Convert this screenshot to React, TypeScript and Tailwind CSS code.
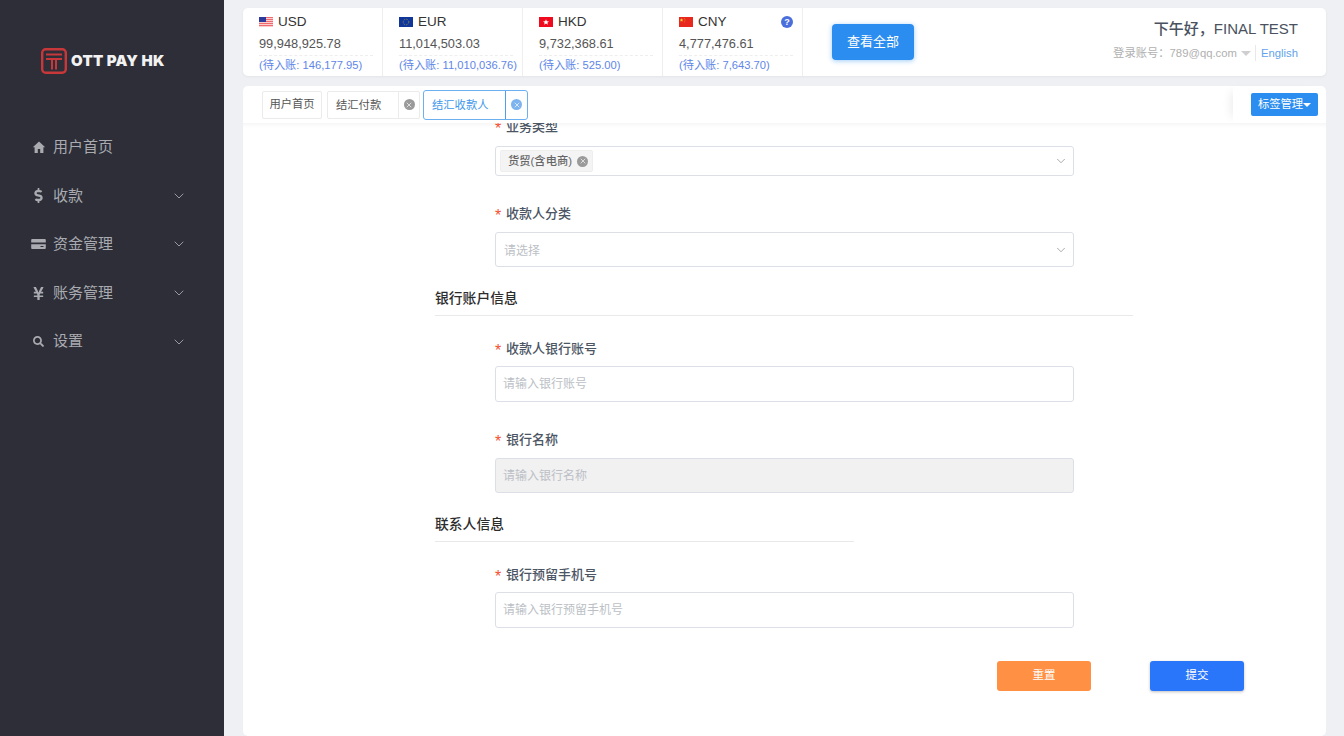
import React from "react";
import { FaDollarSign, FaYenSign, FaSearch } from "react-icons/fa";
import { ChevronDown, X } from "lucide-react";

const font = { fontFamily: '"Liberation Sans", "Noto Sans CJK SC", sans-serif' };

const Flag = ({ c }: { c: string }) => {
  if (c === "USD")
    return (
      <svg width="14" height="10" viewBox="0 0 14 10">
        <rect width="14" height="10" fill="#fbdada" />
        {[0, 2, 4, 6, 8].map((y) => (
          <rect key={y} y={y} width="14" height="1.1" fill="#ee6a6e" />
        ))}
        <rect width="7" height="5" fill="#2c3a9c" />
      </svg>
    );
  if (c === "EUR")
    return (
      <svg width="14" height="10" viewBox="0 0 14 10">
        <rect width="14" height="10" fill="#10369a" />
        <circle cx="7" cy="5" r="2.8" fill="none" stroke="#c9b63a" strokeWidth="0.7" strokeDasharray="0.8 1" />
      </svg>
    );
  if (c === "HKD")
    return (
      <svg width="14" height="10" viewBox="0 0 14 10">
        <rect width="14" height="10" fill="#f00a1e" />
        <path d="M7 2.2 7.8 4.3 10 4.4 8.3 5.7 8.9 7.8 7 6.6 5.1 7.8 5.7 5.7 4 4.4 6.2 4.3Z" fill="#fff" />
      </svg>
    );
  return (
    <svg width="14" height="10" viewBox="0 0 14 10">
      <rect width="14" height="10" fill="#e8281c" />
      <path d="M2.5 1.2 3 2.5 4.2 2.6 3.3 3.4 3.6 4.6 2.5 3.9 1.4 4.6 1.7 3.4 .8 2.6 2 2.5Z" fill="#f6d838" />
      <circle cx="5.2" cy="1.4" r=".35" fill="#f6d838" />
      <circle cx="6" cy="2.5" r=".35" fill="#f6d838" />
      <circle cx="6" cy="3.8" r=".35" fill="#f6d838" />
      <circle cx="5.2" cy="4.9" r=".35" fill="#f6d838" />
    </svg>
  );
};

const currencies = [
  { c: "USD", v: "99,948,925.78", p: "(待入账: 146,177.95)" },
  { c: "EUR", v: "11,014,503.03", p: "(待入账: 11,010,036.76)" },
  { c: "HKD", v: "9,732,368.61", p: "(待入账: 525.00)" },
  { c: "CNY", v: "4,777,476.61", p: "(待入账: 7,643.70)" },
];

const HomeIcon = () => (
  <svg width="14" height="14" viewBox="0 0 14 14" fill="currentColor">
    <path d="M7 1.5.8 7.2h1.8V13h3.2V9h2.4v4h3.2V7.2h1.8z" />
  </svg>
);

const CardIcon = () => (
  <svg width="15" height="12" viewBox="0 0 15 12" fill="currentColor">
    <path fillRule="evenodd" d="M1.2 1h12.6c.5 0 1 .5 1 1v8c0 .5-.5 1-1 1H1.2c-.5 0-1-.5-1-1V2c0-.5.5-1 1-1ZM.2 4.6v1.6h14.6V4.6ZM9.5 8v1h3V8Z" />
  </svg>
);

const nav = [
  { t: "用户首页", i: <HomeIcon />, arrow: false },
  { t: "收款", i: <FaDollarSign size={15} />, arrow: true },
  { t: "资金管理", i: <CardIcon />, arrow: true },
  { t: "账务管理", i: <FaYenSign size={15} />, arrow: true },
  { t: "设置", i: <FaSearch size={11} />, arrow: true },
];

const Close = ({ bg }: { bg: string }) => (
  <span className={`flex h-[11px] w-[11px] items-center justify-center rounded-full ${bg}`}>
    <X size={8} strokeWidth={2} className="text-white" />
  </span>
);

const Label = ({ t, cls }: { t: string; cls: string }) => (
  <div className={`ml-[60px] flex items-center text-[13px] font-medium leading-[18px] text-[#4b5563] ${cls}`}>
    <span className="mr-[5px] w-[6px] translate-y-[2px] text-[16px] leading-[18px] text-[#f5502f]">*</span>
    {t}
  </div>
);

const Section = ({ t, w, cls }: { t: string; w: string; cls: string }) => (
  <div className={`${w} border-b border-[#e9e9e9] pb-[7px] text-[13.8px] font-medium leading-[18px] text-[#2c2c2c] ${cls}`}>{t}</div>
);

const TextInput = ({ p, h, disabled }: { p: string; h: string; disabled?: boolean }) => (
  <div
    className={`ml-[60px] flex w-[579px] items-center rounded-[3px] border border-[#dcdfe6] px-[7px] text-[12px] text-[#bcbfc6] ${h} ${
      disabled ? "bg-[#f1f1f1]" : "bg-white"
    }`}
  >
    {p}
  </div>
);

export default function App() {
  return (
    <div className="flex h-[736px] w-[1344px] overflow-hidden bg-[#eef0f4]" style={font}>
      <aside className="w-[224px] shrink-0 bg-[#2d2e38]">
        <div className="ml-[41px] mt-[48px] flex h-[26px] items-center">
          <svg width="26" height="26" viewBox="0 0 26 26" fill="none">
            <rect x="1.2" y="1.2" width="23.6" height="23.6" rx="3.5" stroke="#c8383a" strokeWidth="2.4" />
            <path d="M5 5.5H21V7.5H5ZM5 10H21V12H5ZM10 12H12V21.5H10ZM14 12H16V21.5H14Z" fill="#c8383a" />
          </svg>
          <span
            className="ml-[4px] whitespace-nowrap text-[15px] font-black tracking-[0.25px] text-[#f2f2f2]"
            style={{ fontFamily: 'Inter, "Liberation Sans", sans-serif' }}
          >
            OTT PAY HK
          </span>
        </div>
        <nav className="mt-[49px]">
          {nav.map((n) => (
            <div key={n.t} className="flex h-[48.6px] items-center pl-[31px] pr-[37px] text-[#a9abb0]">
              <span className="flex w-[15px] justify-center">{n.i}</span>
              <span className="ml-[7px] flex-1 text-[15px]">{n.t}</span>
              {n.arrow && <ChevronDown size={16} strokeWidth={1.3} />}
            </div>
          ))}
        </nav>
      </aside>

      <main className="ml-[19px] w-[1083px] pt-[8px]">
        <header className="flex h-[68px] rounded-[5px] bg-white shadow-[0_1px_3px_rgba(0,0,0,0.05)]">
          {currencies.map((x) => (
            <div key={x.c} className="w-[140px] border-r border-[#eeeeee] pl-[16px] pr-[9px] pt-[6px]">
              <div className="flex h-[16px] items-center text-[13.5px] leading-[16px] text-[#333]">
                <Flag c={x.c} />
                <span className="ml-[5px]">{x.c}</span>
                {x.c === "CNY" && (
                  <span className="ml-auto flex h-[12px] w-[12px] items-center justify-center rounded-full bg-[#4a6fdc] text-[9px] font-bold text-white">
                    ?
                  </span>
                )}
              </div>
              <div className="mt-[4.5px] border-b border-dashed border-[#eeeeee] pb-[3.5px] text-[12.8px] leading-[17px] text-[#555]">{x.v}</div>
              <div className="mt-px whitespace-nowrap text-[11.2px] leading-[16px] text-[#6086e8]">{x.p}</div>
            </div>
          ))}
          <div className="ml-[29px] mt-[16px] flex h-[36px] w-[82px] items-center justify-center rounded-[4px] bg-[#2b8df0] text-[13px] text-white shadow-[0_1px_5px_rgba(43,141,240,0.45)]">
            查看全部
          </div>
          <div className="ml-auto flex flex-col items-end pr-[28px] pt-[11px]">
            <div className="text-[15px] font-medium leading-[20px] text-[#4a5260]">下午好，FINAL TEST</div>
            <div className="mt-[6px] flex items-center text-[11.3px] leading-[16px] text-[#b0b0b0]">
              <span>登录账号：789@qq.com</span>
              <span className="ml-[4px] h-0 w-0 border-x-[5px] border-t-[5px] border-x-transparent border-t-[#cfcfcf]" />
              <span className="ml-[4px] mr-[5px] h-[16px] w-px bg-[#e8e8e8]" />
              <span className="text-[#62a3ea]">English</span>
            </div>
          </div>
        </header>

        <div className="mt-[10px] flex h-[37px] items-center rounded-t-[5px] bg-white pl-[19px]">
          <div className="flex h-[28px] w-[60px] items-center justify-center rounded-[2px] border border-[#ebebeb] text-[11.3px] text-[#555]">用户首页</div>
          <div className="ml-[5px] flex h-[28px] w-[93px] items-center rounded-[2px] border border-[#ebebeb] text-[11.3px] text-[#555]">
            <span className="w-[71px] border-r border-[#ebebeb] pl-[8px] leading-[26px]">结汇付款</span>
            <span className="flex flex-1 justify-center"><Close bg="bg-[#9a9a9a]" /></span>
          </div>
          <div className="ml-[3px] flex h-[30px] w-[105px] items-center rounded-[3px] border border-[#6cb0f2] text-[11.3px] text-[#4098ec]">
            <span className="w-[82px] border-r border-[#4f9eec] pl-[8px] leading-[28px]">结汇收款人</span>
            <span className="flex flex-1 justify-center"><Close bg="bg-[#7db4ef]" /></span>
          </div>
          <div className="ml-auto flex h-[37px] w-[93px] items-center justify-end rounded-tr-[5px] pr-[8px] shadow-[-8px_0_10px_-6px_rgba(0,0,0,0.08)]">
            <div className="flex h-[23px] w-[67px] items-center justify-center rounded-[2px] bg-[#2b8df0] text-[11.3px] text-white">
              标签管理
              <span className="h-0 w-0 border-x-[4px] border-t-[4px] border-x-transparent border-t-white" />
            </div>
          </div>
        </div>

        <section className="h-[613px] overflow-hidden rounded-b-[5px] bg-white pl-[192px] shadow-[inset_0_6px_6px_-6px_rgba(0,0,0,0.08)]">
          <Label t="业务类型" cls="-mt-[5px]" />
          <div className="ml-[60px] mt-[10px] flex h-[30px] w-[579px] items-center rounded-[3px] border border-[#dcdfe6] pl-[4px] pr-[5px]">
            <span className="flex h-[22px] items-center rounded-[2px] border border-[#eeeeee] bg-[#f4f4f5] pl-[7px] pr-[4px] text-[11.3px] font-medium text-[#666]">
              货贸(含电商)
              <span className="ml-[5px]"><Close bg="bg-[#9a9a9a]" /></span>
            </span>
            <ChevronDown size={14} strokeWidth={1.3} className="ml-auto text-[#8f8f8f]" />
          </div>
          <Label t="收款人分类" cls="mt-[29px]" />
          <div className="ml-[60px] mt-[9px] flex h-[35px] w-[579px] items-center rounded-[3px] border border-[#dcdfe6] pl-[8px] pr-[5px] pt-[2px] text-[12px] text-[#bcbfc6]">
            请选择
            <ChevronDown size={14} strokeWidth={1.3} className="-mt-[2px] ml-auto text-[#8f8f8f]" />
          </div>
          <Section t="银行账户信息" w="w-[698px]" cls="mt-[23px]" />
          <Label t="收款人银行账号" cls="mt-[24px]" />
          <div className="mt-[8px]"><TextInput p="请输入银行账号" h="h-[36px]" /></div>
          <Label t="银行名称" cls="mt-[29px]" />
          <div className="mt-[9px]"><TextInput p="请输入银行名称" h="h-[35px]" disabled /></div>
          <Section t="联系人信息" w="w-[419px]" cls="mt-[23px]" />
          <Label t="银行预留手机号" cls="mt-[24px]" />
          <div className="mt-[8px]"><TextInput p="请输入银行预留手机号" h="h-[36px]" /></div>
          <div className="ml-[562px] mt-[33px] flex gap-[59px]">
            <div className="flex h-[30px] w-[94px] items-center justify-center rounded-[3px] bg-[#ff9044] text-[11.5px] text-white">重置</div>
            <div className="flex h-[30px] w-[94px] items-center justify-center rounded-[3px] bg-[#2a76fb] text-[11.5px] text-white shadow-[0_1px_3px_rgba(0,0,0,0.25)]">提交</div>
          </div>
        </section>
      </main>
    </div>
  );
}
